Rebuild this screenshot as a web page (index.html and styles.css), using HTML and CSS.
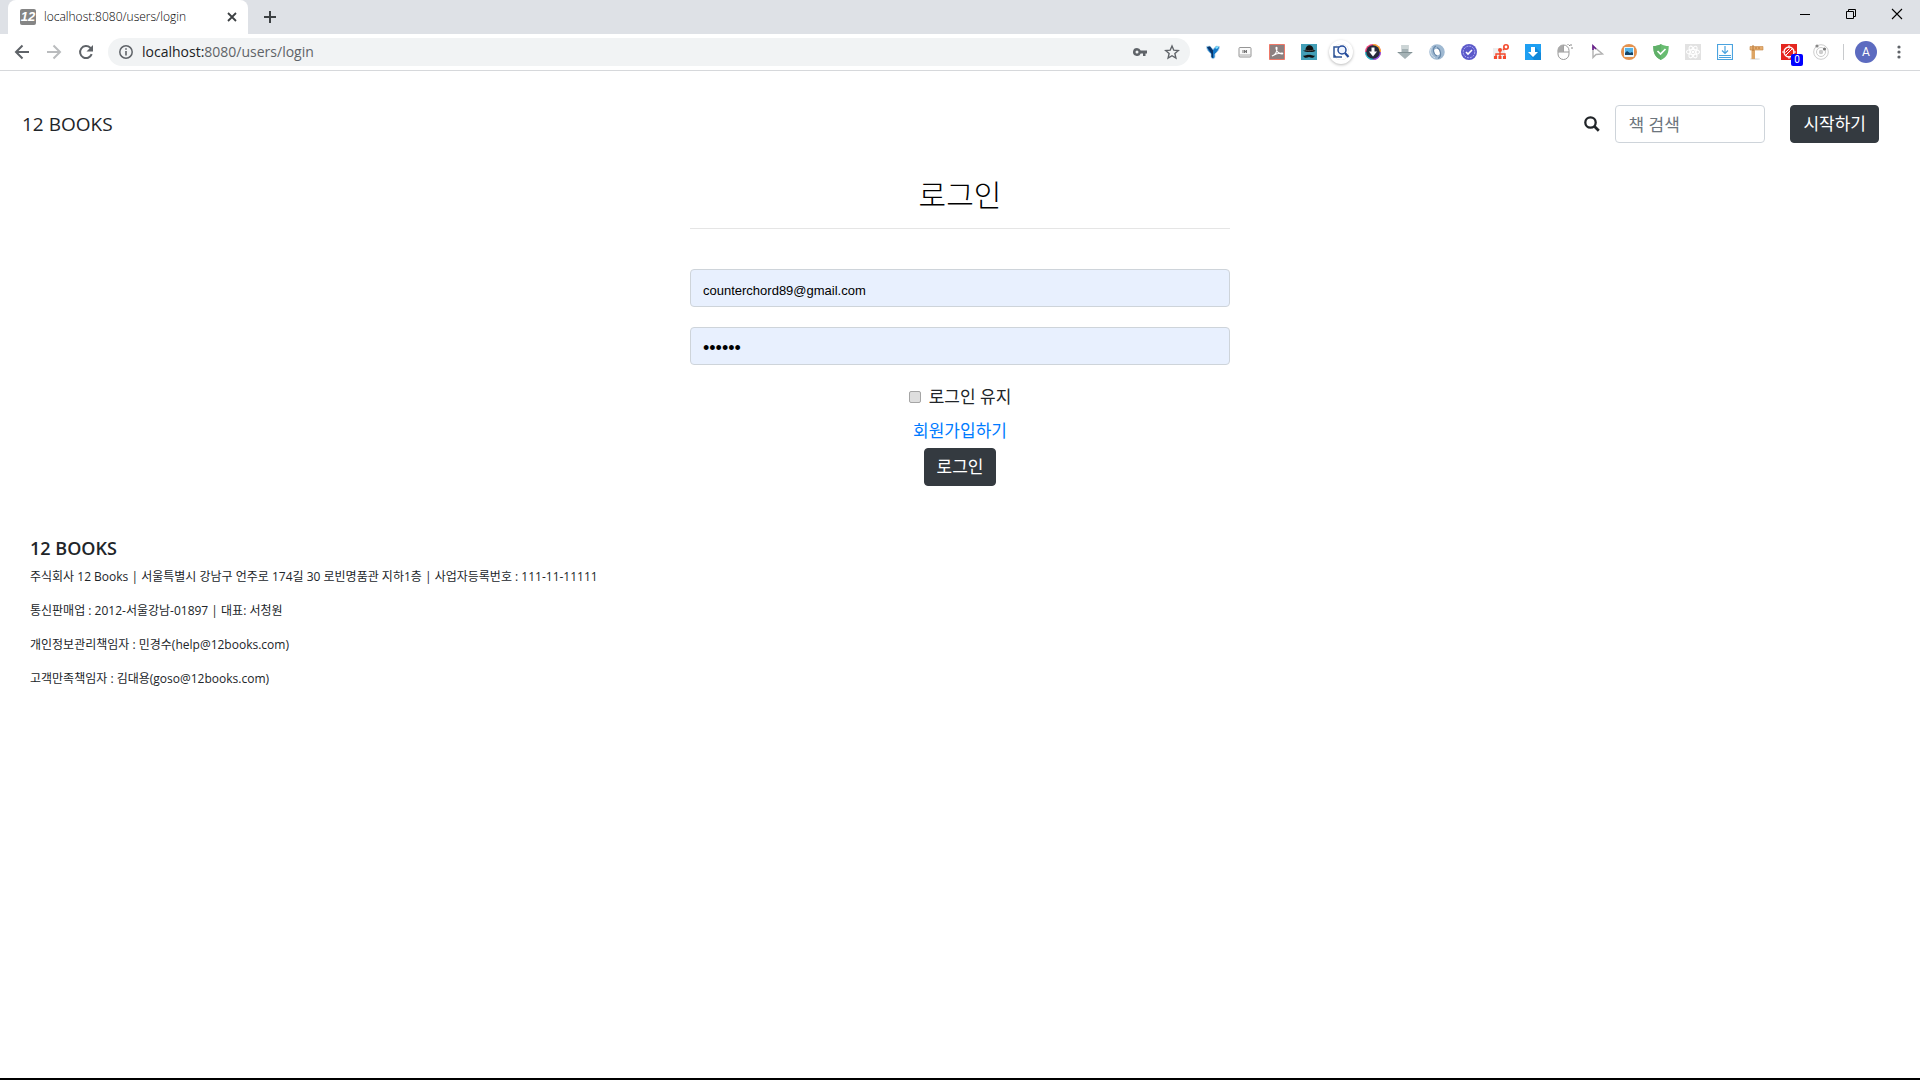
FILE: index.html
```
<!DOCTYPE html>
<html lang="ko">
<head>
    <meta charset="UTF-8">
    <meta name="viewport" content="width=device-width, initial-scale=1.0">
    <title>12 BOOKS</title>
    <link rel="stylesheet" href="styles.css">
</head>
<body>
    <!-- browser window -->
    <div class="tab-strip">
        <div class="tab">
            <span class="favicon">12</span>
            <span class="tab-title">localhost:8080/users/login</span>
            <button class="icon-btn" type="button" aria-label="Close tab">
                <svg width="16" height="16" viewBox="0 0 16 16"><path d="M4 4l8 8M12 4l-8 8" stroke="#3c4043" stroke-width="1.8"/></svg>
            </button>
        </div>
        <button class="icon-btn new-tab" type="button" aria-label="New tab">
            <svg width="16" height="16" viewBox="0 0 16 16"><path d="M8 2v12M2 8h12" stroke="#3c4043" stroke-width="2"/></svg>
        </button>
        <div class="window-buttons">
            <button class="icon-btn" type="button" aria-label="Minimize"><svg width="12" height="12" viewBox="0 0 12 12"><path d="M1 6.500h10" stroke="#000"/></svg></button>
            <button class="icon-btn" type="button" aria-label="Restore"><svg width="12" height="12" viewBox="0 0 12 12" fill="none" stroke="#000"><path d="M1.500 3.500h7v7h-7zM3.500 3V1.500h7v7H9"/></svg></button>
            <button class="icon-btn" type="button" aria-label="Close"><svg width="12" height="12" viewBox="0 0 12 12"><path d="M1 1l10 10M11 1L1 11" stroke="#000" stroke-width="1.100"/></svg></button>
        </div>
    </div>

    <div class="toolbar">
        <div class="nav-buttons">
            <button class="icon-btn" type="button" aria-label="Back"><svg width="16" height="16" viewBox="0 0 16 16" fill="none" stroke="#5f6368" stroke-width="2"><path d="M15 8H2M8.500 1.500L2 8l6.500 6.500"/></svg></button>
            <button class="icon-btn" type="button" aria-label="Forward"><svg width="16" height="16" viewBox="0 0 16 16" fill="none" stroke="#babcbe" stroke-width="2"><path d="M1 8h13M7.500 1.500L14 8l-6.500 6.500"/></svg></button>
            <button class="icon-btn" type="button" aria-label="Reload"><svg width="16" height="16" viewBox="0 0 16 16"><path d="M13.700 10.200A6 6 0 1 1 12.300 3.800L14 5.500" fill="none" stroke="#5f6368" stroke-width="2"/><path d="M15 1v6.500H8.500z" fill="#5f6368"/></svg></button>
        </div>
        <div class="omnibox">
            <svg width="16" height="16" viewBox="0 0 16 16"><circle cx="8" cy="8" r="6.200" fill="none" stroke="#5f6368" stroke-width="1.500"/><path d="M8 7v4.500M8 4.200v1.600" stroke="#5f6368" stroke-width="1.600"/></svg>
            <span class="url"><b>localhost:</b>8080/users/login</span>
            <svg width="16" height="16" viewBox="0 0 16 16"><path fill="#5f6368" fill-rule="evenodd" d="M5 4A4 4 0 1 0 8.700 9.500H11V12h2.500V9.500H15V6.500H8.700A4 4 0 0 0 5 4zM5 6.500a1.500 1.500 0 1 1 0 3 1.500 1.500 0 0 1 0-3z"/></svg>
            <svg width="16" height="16" viewBox="0 0 16 16"><path fill="none" stroke="#5f6368" stroke-width="1.400" d="M8 2l1.800 4.200 4.500.4-3.400 3 1 4.400L8 11.700 4.100 14l1-4.400-3.400-3 4.500-.4z"/></svg>
        </div>
        <div class="extensions">
            <svg viewBox="0 0 16 16"><path d="M1.500 2.500L5 2l3 3.500L11 2l3.500.5C14.500 6 12 8 10 10v3.500L8 15l-2-1.500V10C4 8 1.500 6 1.500 2.500z" fill="#1678c8" stroke="#c4dbe8" stroke-width=".8"/><path d="M2 3l3-.5 3 4V14l-1.500-1V9.500z" fill="#0a3468"/><path d="M10.500 4l2.500-1" stroke="#7de0ff" stroke-width="2"/></svg>
            <svg viewBox="0 0 16 16"><rect x="2" y="3.500" width="12" height="9.500" rx="1" fill="#fafafa" stroke="#969696"/><path d="M2.500 11h11" stroke="#aaa"/><path d="M6 6v3M7.500 6v3l2-3v3" stroke="#777" fill="none"/></svg>
            <svg viewBox="0 0 16 16"><path d="M.5.5h15v15H.5z" fill="#8c8080" stroke="#ee7868"/><path d="M3 12c3-1 5-4 5-8 0-1-1-1-1 0 0 3 3 6 6 6 1 0 1-1 0-1-3 0-7 1-10 3z" fill="none" stroke="#fff" stroke-width="1.100"/></svg>
            <svg viewBox="0 0 16 16"><path d="M0 0h16v16H0z" fill="#439fb7"/><path d="M4.500 6.500c-.5-7 8-7 8-.5l2 .5c-1 2-10 2-12.500 0zM2 11.500c2 1 4-1.500 6-.5 2-1 4 1.500 6 .5-1 3-4 2.500-6 1.500-2 1-5 1.500-6-1.500z" fill="#101010"/><path d="M4.500 6c3 1 5 1 8 0" stroke="#555" fill="none"/></svg>
            <svg class="raised" viewBox="0 0 16 16"><path d="M6 3H1v10h8M3 13L1 11" fill="none" stroke="#2f5597" stroke-width="1.500"/><circle cx="9" cy="6" r="4" fill="#eef4ff" stroke="#244b9b" stroke-width="1.500"/><path d="M12 9l3.500 4" stroke="#244b9b" stroke-width="2.200"/></svg>
            <svg viewBox="0 0 16 16"><circle cx="8" cy="8" r="8" fill="#ef477d"/><path d="M8 0a8 8 0 0 1 8 8H8z" fill="#ffb02e"/><path d="M16 8a8 8 0 0 1-8 8V8z" fill="#8d54e8"/><path d="M8 16a8 8 0 0 1-8-8h8z" fill="#21c6d5"/><circle cx="8" cy="8" r="6.800" fill="#272b3c"/><path d="M6.500 3.500h3v4H12l-4 5-4-5h2.500z" fill="#fff"/></svg>
            <svg viewBox="0 0 16 16"><path d="M4.500 1h7v7H16l-8 7-8-7h4.500z" fill="#a5b2b5"/><path d="M5 1h6v4H5z" fill="#ccd5d6"/><path d="M1 8.500h14" stroke="#829194"/></svg>
            <svg viewBox="0 0 16 16"><circle cx="8" cy="8" r="5.500" fill="none" stroke="#9fb9d2" stroke-width="4.500"/><path d="M7 2C3 4 4 10 8 12M9 14.500c4-2 3-9-1-11" fill="none" stroke="#6686a8" stroke-width="1.200"/><path d="M3 3C0 7 2 12 6 14" fill="none" stroke="#d5e2ec"/></svg>
            <svg viewBox="0 0 16 16"><circle cx="8" cy="8" r="8" fill="#5b59c9"/><circle cx="8" cy="8" r="5.800" fill="none" stroke="#c8c7ff" stroke-width=".8" stroke-dasharray="2 1"/><path d="M5 8l2 2 4-4" fill="none" stroke="#fff" stroke-width="1.600"/></svg>
            <svg viewBox="0 0 16 16"><path d="M0 4h12v11H0z" fill="#eee"/><circle cx="13" cy="3" r="2.200" fill="none" stroke="#f4492c" stroke-width="1.600"/><circle cx="7" cy="6" r="2" fill="#f4492c"/><path d="M7 7v6M3 13v-3h9v3M10 6l2-2" stroke="#f4492c" fill="none" stroke-width="1.400"/><path d="M1 12h3v3H1zM5.500 12h3v3h-3zM10 12h3v3h-3z" fill="#f4492c"/></svg>
            <svg viewBox="0 0 16 16"><path d="M0 0h16v16H0z" fill="#1e9ff2"/><path d="M10 3l6 6v7H9l-5-6z" fill="#1188d9"/><path d="M6 3h4v5h3l-5 5-5-5h3z" fill="#fff"/></svg>
            <svg viewBox="0 0 16 16"><path d="M1 7V6.500a5.500 5.500 0 0 1 11 0V10a5.500 5.500 0 0 1-11 0zM1 8h11M6.500 1v7" fill="#fff" stroke="#999"/><path d="M1 8a5.500 5.500 0 0 1 5.500-7v7z" fill="#aaa"/><path d="M12 1l1 1M14 0v2M14 4h2M11 0v1" stroke="#888"/></svg>
            <svg viewBox="0 0 16 16"><path d="M4 2v11.500l3-3 6.500-.5z" fill="#fff" stroke="#b2b2b2" stroke-width="1.400"/><path d="M4 6V2l3 3" fill="none" stroke="#69208c" stroke-width="1.600"/></svg>
            <svg viewBox="0 0 16 16"><circle cx="8" cy="8" r="8" fill="#e5924e"/><rect x="3" y="3" width="10" height="10" rx="1" fill="#e8f6ff"/><path d="M4 4h8v7H4z" fill="#56b4e8"/><path d="M4 11V9l2-2 3 2 2-1 1 1v2z" fill="#174364"/></svg>
            <svg viewBox="0 0 16 16"><path d="M8 0c2 1.500 5 2 7.700 2 0 7-1.500 11-7.700 14C1.800 13 .3 9 .3 2 3 2 6 1.500 8 0z" fill="#68bc71"/><path d="M8 0v16C1.800 13 .3 9 .3 2 3 2 6 1.500 8 0z" fill="#60b069"/><path d="M4.500 7l3 3 5-5" fill="none" stroke="#fff" stroke-width="1.700"/></svg>
            <svg viewBox="0 0 16 16"><path d="M0 0h16v16H0z" fill="#e2e2e2"/><g fill="none" stroke="#fff" stroke-width="1.100"><ellipse cx="8" cy="8" rx="6.500" ry="2.500"/><ellipse cx="8" cy="8" rx="6.500" ry="2.500" transform="rotate(60 8 8)"/><ellipse cx="8" cy="8" rx="6.500" ry="2.500" transform="rotate(120 8 8)"/></g><circle cx="8" cy="8" r="1.300" fill="#fff"/></svg>
            <svg viewBox="0 0 16 16"><path d="M.5.5h15v15H.5zM2 11.500h3M11 11.500h3M2 13.500h12M8 2v7M5 6.500l3 3 3-3M5 11.500h6" fill="none" stroke="#4aa3df" stroke-width="1.200"/></svg>
            <svg viewBox="0 0 16 16"><ellipse cx="6" cy="15" rx="5" ry="1" fill="#e5e5e5"/><path d="M2.500 3h3.500v12H2.500z" fill="#dda565"/><path d="M1 2.500h13V6H1z" fill="#e6ad70" stroke="#c48645" stroke-width=".6"/><path d="M4 1v6M7 3v2M10 3v2" stroke="#b97837"/></svg>
            <span class="badged"><svg viewBox="0 0 16 16"><path d="M0 0h16v16H0z" fill="#e5261f"/><circle cx="8" cy="8" r="5" fill="none" stroke="#fff" stroke-width="1.300"/><path d="M8 1v3M8 12v3M1 8h3M12 8h3M5 11l6-6M4.500 8.500l4-4" stroke="#fff"/></svg><span class="badge">0</span></span>
            <svg viewBox="0 0 16 16"><g fill="none" stroke="#ccc"><circle cx="8" cy="8" r="7.300"/><circle cx="8" cy="8" r="4.500"/></g><circle cx="8" cy="8" r="2.200" fill="#ccc"/><circle cx="4" cy="2" r="1.600" fill="#888"/><circle cx="11.500" cy="5" r="1.600" fill="#777"/></svg>
        </div>
        <span class="divider"></span>
        <button class="avatar" type="button">A</button>
        <button class="icon-btn" type="button" aria-label="Menu"><svg width="16" height="16" viewBox="0 0 16 16" fill="#5f6368"><circle cx="8" cy="3" r="1.600"/><circle cx="8" cy="8" r="1.600"/><circle cx="8" cy="13" r="1.600"/></svg></button>
    </div>

    <!-- page -->
    <header class="navbar">
        <a class="brand" href="#">12 BOOKS</a>
        <form class="search">
            <label for="search" aria-label="책 검색"><svg width="16" height="16" viewBox="0 0 16 16"><circle cx="6.500" cy="6.500" r="5.200" fill="none" stroke="#212529" stroke-width="2.300"/><path d="M10.300 10.300l4.500 4.500" stroke="#212529" stroke-width="2.700"/></svg></label>
            <input class="form-control" type="text" id="search" placeholder="책 검색">
        </form>
        <button class="btn" type="button">시작하기</button>
    </header>

    <main class="login">
        <h3>로그인</h3>
        <hr>
        <form class="login-form">
            <input class="form-control filled" type="email" value="counterchord89@gmail.com" aria-label="이메일">
            <input class="form-control filled" type="password" value="123456" aria-label="비밀번호">
            <div class="remember">
                <input type="checkbox" id="remember">
                <label for="remember">로그인 유지</label>
            </div>
            <a class="join" href="#">회원가입하기</a>
            <button class="btn" type="submit">로그인</button>
        </form>
    </main>

    <footer class="footer">
        <h5>12 BOOKS</h5>
        <p>주식회사 12 Books | 서울특별시 강남구 언주로 174길 30 로빈명품관 지하1층 | 사업자등록번호 : 111-11-11111</p>
        <p>통신판매업 : 2012-서울강남-01897 | 대표: 서청원</p>
        <p>개인정보관리책임자 : 민경수(help@12books.com)</p>
        <p>고객만족책임자 : 김대용(goso@12books.com)</p>
    </footer>
</body>
</html>
```
FILE: styles.css
```
* {
    box-sizing: border-box;
}

body {
    margin: 0;
    min-height: 100vh;
    display: flex;
    flex-direction: column;
    font-family: "Open Sans", "Noto Sans CJK KR", sans-serif;
    font-size: 17px;
    line-height: 24px;
    color: #212529;
    background-color: #fff;
    border-bottom: 2px solid #000;
}

svg {
    display: block;
    flex: none;
}

.icon-btn {
    display: flex;
    padding: 0;
    border: none;
    background: none;
}

/* browser window */
.tab-strip {
    display: flex;
    height: 34px;
    padding-left: 8px;
    background-color: #dee1e6;
}

.tab {
    display: flex;
    align-items: center;
    gap: 8px;
    width: 240px;
    padding: 0 8px 0 12px;
    border-radius: 8px 8px 0 0;
    background-color: #fff;
    font-size: 12px;
    font-weight: 300;
    color: #000;
}

.tab-title {
    flex: 1;
}

.favicon {
    width: 16px;
    height: 16px;
    border-radius: 2px;
    background-color: #858585;
    color: #fff;
    font: italic bold 13px/16px "Liberation Sans", sans-serif;
    text-align: center;
}

.new-tab {
    align-self: center;
    margin-left: 14px;
}

.window-buttons {
    display: flex;
    gap: 34px;
    margin-left: auto;
    padding: 8px 17px 0 0;
    align-items: flex-start;
}

.toolbar {
    display: flex;
    align-items: center;
    height: 37px;
    padding: 0 13px 0 14px;
    border-bottom: 1px solid #d6d8db;
}

.nav-buttons {
    display: flex;
    gap: 16px;
    margin-right: 14px;
}

.omnibox {
    display: flex;
    align-items: center;
    flex: 1;
    gap: 16px;
    height: 28px;
    padding: 0 10px;
    border-radius: 14px;
    background-color: #f1f3f4;
    font-size: 14px;
}

.url {
    flex: 1;
    margin-left: -8px;
    color: #5f6368;
}

.url b {
    font-weight: normal;
    color: #202124;
}

.extensions {
    display: flex;
    gap: 16px;
    padding: 0 14px 0 15px;
}

.extensions svg {
    width: 16px;
    height: 16px;
}

.extensions .raised {
    overflow: visible;
    border-radius: 50%;
    box-shadow: 0 0 0 4px #fff, 0 1px 3px 4px #bbb;
}

.badged {
    position: relative;
}

.badge {
    position: absolute;
    left: 10px;
    top: 10px;
    width: 12px;
    height: 12px;
    border-radius: 2px;
    background-color: #00f;
    color: #fff;
    font: 10px/12px Roboto, sans-serif;
    text-align: center;
}

.divider {
    width: 1px;
    height: 16px;
    background-color: #c8cacd;
}

.avatar {
    width: 22px;
    height: 22px;
    margin: 0 14px 0 11px;
    padding: 0;
    border: none;
    border-radius: 50%;
    background-color: #5c6bc0;
    color: #fff;
    font: 12px/22px Roboto, sans-serif;
}

/* page */
.navbar {
    display: flex;
    align-items: center;
    padding: 34px 41px 34px 22px;
}

.brand {
    margin-right: auto;
    font-size: 19px;
    color: #212529;
    text-decoration: none;
}

.search {
    display: flex;
    align-items: center;
    gap: 15px;
    margin-right: 25px;
}

.search .form-control {
    width: 150px;
}

.form-control {
    display: block;
    width: 100%;
    height: 38px;
    padding: 6px 12px;
    border: 1px solid #ced4da;
    border-radius: 4px;
    font: inherit;
    color: #495057;
    background-color: #fff;
}

.form-control::placeholder {
    color: #6c757d;
}

.form-control.filled {
    margin-bottom: 20px;
    padding-top: 10px;
    background-color: #e8f0fe;
    font: 13px "Liberation Sans", sans-serif;
    color: #000;
}

.form-control[type="password"] {
    font-size: 18px;
}

.btn {
    padding: 6px 12px;
    border: 1px solid #343a40;
    border-radius: 4px;
    font: inherit;
    line-height: 24px;
    color: #fff;
    background-color: #343a40;
}

.login {
    width: 100%;
    max-width: 540px;
    margin: 0 auto;
    text-align: center;
}

.login h3 {
    margin: 0;
    font-size: 30px;
    font-weight: 300;
    line-height: 36px;
    color: #000;
}

.login hr {
    margin: 15px 0 40px;
    border: none;
    border-top: 1px solid #e5e5e5;
}

.login-form {
    display: flex;
    flex-direction: column;
    align-items: center;
}

.remember {
    display: flex;
    align-items: center;
    gap: 8px;
    margin-bottom: 10px;
}

.remember input {
    appearance: none;
    width: 12px;
    height: 12px;
    margin: 0;
    border: 1px solid #a5a5a5;
    border-radius: 2px;
    background-color: #dedede;
}

.join {
    margin-bottom: 5px;
    color: #007bff;
    text-decoration: none;
}

.footer {
    padding: 50px 30px;
}

.footer h5 {
    margin: 0 0 5px;
    font-size: 18px;
    font-weight: 600;
}

.footer p {
    margin: 0 0 10px;
    font-size: 12px;
}
```
